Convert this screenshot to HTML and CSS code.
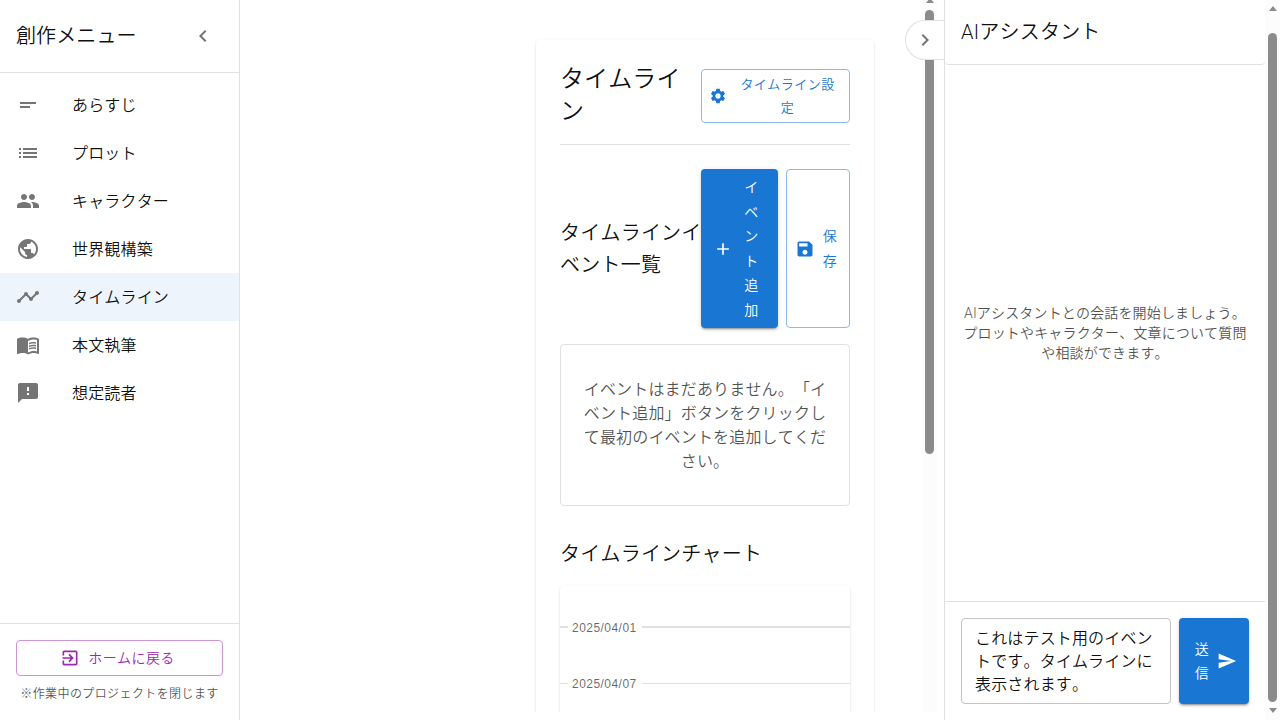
FILE: index.html
```html
<!DOCTYPE html>
<html lang="ja">
<head>
<meta charset="utf-8">
<title>タイムライン</title>
<link rel="stylesheet" href="styles.css">
</head>
<body>
<div class="app">
  <aside class="sidebar">
    <header class="sidebar-head">
      <h2 class="h6">創作メニュー</h2>
      <svg class="icon chevron" viewBox="0 0 24 24"><path d="M15.41 7.41 14 6l-6 6 6 6 1.41-1.41L10.83 12z"/></svg>
    </header>
    <nav class="nav">
      <a class="nav-item"><svg class="icon" viewBox="0 0 24 24"><path d="M4 9h16v2H4zm0 4h10v2H4z"/></svg><span>あらすじ</span></a>
      <a class="nav-item"><svg class="icon" viewBox="0 0 24 24"><path d="M3 13h2v-2H3zm0 4h2v-2H3zm0-8h2V7H3zm4 4h14v-2H7zm0 4h14v-2H7zM7 7v2h14V7z"/></svg><span>プロット</span></a>
      <a class="nav-item"><svg class="icon" viewBox="0 0 24 24"><path d="M16 11c1.66 0 2.99-1.34 2.99-3S17.66 5 16 5s-3 1.34-3 3 1.34 3 3 3m-8 0c1.66 0 2.99-1.34 2.99-3S9.66 5 8 5 5 6.34 5 8s1.34 3 3 3m0 2c-2.33 0-7 1.17-7 3.5V19h14v-2.5c0-2.33-4.67-3.5-7-3.5m8 0c-.29 0-.62.02-.97.05 1.16.84 1.97 1.97 1.97 3.45V19h6v-2.5c0-2.33-4.67-3.5-7-3.5"/></svg><span>キャラクター</span></a>
      <a class="nav-item"><svg class="icon" viewBox="0 0 24 24"><path d="M12 2C6.48 2 2 6.48 2 12s4.48 10 10 10 10-4.48 10-10S17.52 2 12 2m-1 17.93c-3.95-.49-7-3.85-7-7.93 0-.62.08-1.21.21-1.79L9 15v1c0 1.1.9 2 2 2zm6.9-2.54c-.26-.81-1-1.39-1.9-1.39h-1v-3c0-.55-.45-1-1-1H8v-2h2c.55 0 1-.45 1-1V7h2c1.1 0 2-.9 2-2v-.41c2.93 1.19 5 4.06 5 7.41 0 2.08-.8 3.97-2.1 5.39"/></svg><span>世界観構築</span></a>
      <a class="nav-item selected"><svg class="icon" viewBox="0 0 24 24"><path d="M23 8c0 1.100-.9 2-2 2-.18 0-.35-.02-.51-.07l-3.560 3.550c.05.16.07.34.07.52 0 1.100-.9 2-2 2s-2-.9-2-2c0-.18.02-.36.07-.52l-2.550-2.550c-.16.05-.34.07-.52.07s-.36-.02-.52-.07l-4.550 4.560c.05.16.07.33.07.51 0 1.100-.9 2-2 2s-2-.9-2-2 .9-2 2-2c.18 0 .35.02.51.07l4.560-4.550C8.020 9.360 8 9.180 8 9c0-1.100.9-2 2-2s2 .9 2 2c0 .18-.02.36-.07.52l2.550 2.550c.16-.05.34-.07.52-.07s.36.02.52.07l3.550-3.560C19.020 8.350 19 8.180 19 8c0-1.100.9-2 2-2s2 .9 2 2"/></svg><span>タイムライン</span></a>
      <a class="nav-item"><svg class="icon" viewBox="0 0 24 24"><path d="M21 5c-1.110-.35-2.330-.5-3.500-.5-1.950 0-4.050.4-5.500 1.500-1.450-1.100-3.550-1.500-5.500-1.500S2.450 4.900 1 6v14.650c0 .25.25.5.5.5.1 0 .15-.05.25-.05C3.100 20.450 5.050 20 6.500 20c1.950 0 4.050.4 5.500 1.500 1.350-.85 3.800-1.500 5.500-1.500 1.650 0 3.350.3 4.750 1.050.1.05.15.05.25.05.25 0 .5-.25.5-.5V6c-.6-.45-1.250-.75-2-1m0 13.500c-1.100-.35-2.300-.5-3.500-.5-1.700 0-4.150.65-5.500 1.500V8c1.350-.85 3.800-1.500 5.500-1.500 1.200 0 2.400.15 3.500.5z"/><path d="M17.500 10.500c.88 0 1.730.09 2.500.26V9.240c-.79-.15-1.640-.24-2.500-.24-1.700 0-3.240.29-4.500.83v1.660c1.130-.64 2.700-.99 4.500-.99M13 12.490v1.660c1.130-.64 2.700-.99 4.500-.99.88 0 1.730.09 2.500.26V11.900c-.79-.15-1.640-.24-2.500-.24-1.700 0-3.240.3-4.500.83m4.500 1.840c-1.700 0-3.240.29-4.500.83v1.660c1.130-.64 2.700-.99 4.500-.99.88 0 1.730.09 2.500.26v-1.520c-.79-.16-1.640-.24-2.500-.24"/></svg><span>本文執筆</span></a>
      <a class="nav-item"><svg class="icon" viewBox="0 0 24 24"><path d="M20 2H4c-1.100 0-1.990.9-1.990 2L2 22l4-4h14c1.100 0 2-.9 2-2V4c0-1.100-.9-2-2-2m-7 12h-2v-2h2zm0-4h-2V6h2z"/></svg><span>想定読者</span></a>
    </nav>
    <footer class="sidebar-foot">
      <button class="btn outlined secondary"><svg class="icon i20" viewBox="0 0 24 24"><path d="M10.090 15.590 11.500 17l5-5-5-5-1.410 1.410L12.670 11H3v2h9.670zM19 3H5c-1.110 0-2 .9-2 2v4h2V5h14v14H5v-4H3v4c0 1.100.89 2 2 2h14c1.100 0 2-.9 2-2V5c0-1.100-.9-2-2-2"/></svg><span>ホームに戻る</span></button>
      <p class="caption">※作業中のプロジェクトを閉じます</p>
    </footer>
  </aside>

  <main class="main">
    <section class="paper">
      <header class="page-head">
        <h1 class="h5">タイムライ<br>ン</h1>
        <button class="btn outlined small"><svg class="icon i18" viewBox="0 0 24 24"><path d="M19.140 12.940c.04-.3.06-.61.06-.94 0-.32-.02-.64-.07-.94l2.030-1.580c.18-.14.23-.41.12-.61l-1.920-3.320c-.12-.22-.37-.29-.59-.22l-2.390.96c-.5-.38-1.030-.7-1.620-.94l-.36-2.540c-.04-.24-.24-.41-.48-.41h-3.840c-.24 0-.43.17-.47.41l-.36 2.540c-.59.24-1.130.57-1.620.94l-2.390-.96c-.22-.08-.47 0-.59.22L2.740 8.870c-.12.21-.08.47.12.61l2.030 1.580c-.05.3-.09.63-.09.94s.02.64.07.94l-2.030 1.580c-.18.14-.23.41-.12.61l1.920 3.320c.12.22.37.29.59.22l2.390-.96c.5.38 1.030.7 1.620.94l.36 2.540c.05.24.24.41.48.41h3.840c.24 0 .44-.17.47-.41l.36-2.540c.59-.24 1.130-.56 1.620-.94l2.390.96c.22.08.47 0 .59-.22l1.920-3.320c.12-.22.07-.47-.12-.61zM12 15.600c-1.980 0-3.600-1.620-3.600-3.600s1.620-3.600 3.600-3.600 3.600 1.620 3.600 3.600-1.620 3.600-3.600 3.600"/></svg><span>タイムライン設<br>定</span></button>
      </header>
      <div class="list-head">
        <h2 class="h6">タイムラインイ<br>ベント一覧</h2>
        <div class="actions">
          <button class="btn contained add"><svg class="icon i20" viewBox="0 0 24 24"><path d="M19 13h-6v6h-2v-6H5v-2h6V5h2v6h6z"/></svg><span>イ<br>ベ<br>ン<br>ト<br>追<br>加</span></button>
          <button class="btn outlined save"><svg class="icon i20" viewBox="0 0 24 24"><path d="M17 3H5c-1.110 0-2 .9-2 2v14c0 1.100.89 2 2 2h14c1.100 0 2-.9 2-2V7zm-5 16c-1.660 0-3-1.340-3-3s1.340-3 3-3 3 1.340 3 3-1.340 3-3 3m3-10H5V5h10z"/></svg><span>保<br>存</span></button>
        </div>
      </div>
      <p class="empty">イベントはまだありません。「イ<br>ベント追加」ボタンをクリックし<br>て最初のイベントを追加してくだ<br>さい。</p>
      <h2 class="h6 chart-title">タイムラインチャート</h2>
      <div class="chart">
        <div class="tick first"><time>2025/04/01</time></div>
        <div class="tick"><time>2025/04/07</time></div>
      </div>
    </section>
    <div class="scroll main-scroll"><i class="arrow up"></i><i class="thumb"></i></div>
    <button class="toggle"><svg class="icon chevron" viewBox="0 0 24 24"><path d="M10 6 8.590 7.410 13.170 12l-4.580 4.590L10 18l6-6z"/></svg></button>
  </main>

  <aside class="chat">
    <header class="chat-head"><h2 class="h6">AIアシスタント</h2></header>
    <div class="messages"><p>AIアシスタントとの会話を開始しましょう。<br>プロットやキャラクター、文章について質問<br>や相談ができます。</p></div>
    <footer class="composer">
      <div class="field">これはテスト用のイベン<br>トです。タイムラインに<br>表示されます。</div>
      <button class="btn contained send"><span>送<br>信</span><svg class="icon i20" viewBox="0 0 24 24"><path d="M2.010 21 23 12 2.010 3 2 10l15 2-15 2z"/></svg></button>
    </footer>
  </aside>
  <div class="scroll page-scroll"><i class="arrow up"></i><i class="thumb"></i><i class="arrow down"></i></div>
</div>
</body>
</html>
```
FILE: styles.css
```css
* { box-sizing: border-box; }
body { margin: 0; overflow: hidden; background: #fff; color: rgba(0,0,0,.95); font: 350 16px/24px Roboto, "Noto Sans CJK JP", sans-serif; letter-spacing: .16px; text-spacing-trim: space-all; font-kerning: none; }
h1, h2, p { margin: 0; font-weight: inherit; white-space: nowrap; }
.h6 { font-size: 20px; line-height: 32px; letter-spacing: .22px; }
.h5 { font-size: 24px; line-height: 32px; letter-spacing: .1px; }
.icon { width: 24px; height: 24px; fill: currentColor; flex: none; display: block; }
.i18 { width: 18px; height: 18px; }
.i20 { width: 20px; height: 20px; }
.app { display: flex; height: 720px; width: 1280px; overflow: hidden; }

.sidebar { width: 240px; border-right: 1px solid #e0e0e0; display: flex; flex-direction: column; flex: none; }
.sidebar-head { height: 73px; padding: 0 24px 1px 16px; border-bottom: 1px solid #e0e0e0; display: flex; align-items: center; justify-content: space-between; }
.sidebar-head .h6 { letter-spacing: .1px; }
.chevron { color: #757575; width: 24px; }
.nav { padding-top: 8px; flex: 1; }
.nav-item { height: 48px; padding: 0 16px; display: flex; align-items: center; gap: 32px; }
.nav-item .icon { color: #757575; }
.nav-item span { padding-top: 1px; }
.selected { background: #edf4fc; }
.sidebar-foot { height: 97px; border-top: 1px solid #e0e0e0; padding: 16px; display: flex; flex-direction: column; gap: 8px; text-align: center; }
.caption { font-size: 12px; line-height: 20px; letter-spacing: .4px; color: rgba(0,0,0,.7); }

.btn { font: inherit; font-size: 14px; line-height: 24.5px; letter-spacing: .4px; display: flex; align-items: center; justify-content: center; gap: 8px; border: 1px solid transparent; border-radius: 4px; padding: 5px 15px; background: none; white-space: nowrap; flex: none; }
.btn .icon:first-child { margin-left: -4px; }
.btn .icon:last-child { margin-right: -4px; }
.outlined { color: #1976d2; border-color: #8cbae8; }
.secondary { color: #9c27b0; border-color: #ce93d8; height: 36px; }
.small { width: 149px; height: 54px; padding: 4px 9px 2px 11px; font-size: 13px; line-height: 22.75px; letter-spacing: .46px; }
.small .icon { margin-bottom: 2px; }
.small span { flex: 1; }
.contained { color: #fff; background: #1976d2; box-shadow: 0 3px 1px -2px rgba(0,0,0,.2), 0 2px 2px rgba(0,0,0,.14), 0 1px 5px rgba(0,0,0,.12); }

.main { flex: 1; position: relative; display: flex; padding: 40px 0 0 296px; height: 712px; overflow: hidden; min-width: 0; }
.paper { width: 338px; height: 760px; flex: none; padding: 24px; border-radius: 4px; box-shadow: 0 2px 1px -1px rgba(0,0,0,.12), 0 1px 1px rgba(0,0,0,.08), 0 1px 3px rgba(0,0,0,.12); }
.page-head { height: 81px; padding-bottom: 16px; border-bottom: 1px solid #e0e0e0; display: flex; align-items: center; justify-content: space-between; }
.page-head h1 { padding-bottom: 3px; }
.list-head { display: flex; align-items: center; justify-content: space-between; margin: 24px 0 16px; height: 159px; }
.actions { display: flex; gap: 8px; margin-left: -10px; align-self: stretch; }
.add { width: 77px; }
.add span { flex: 1; }
.save { width: 64px; padding: 5px 12px; }
.empty { border: 1px solid #e0e0e0; border-radius: 4px; height: 162px; padding: 33px 0 31px; text-align: center; color: rgba(0,0,0,.7); }
.chart-title { margin: 32px 0 16px; }
.chart { height: 300px; padding-top: 30px; border-radius: 4px; box-shadow: 0 2px 1px -1px rgba(0,0,0,.2), 0 1px 1px rgba(0,0,0,.14), 0 1px 3px rgba(0,0,0,.12); }
.tick { display: flex; align-items: center; height: 24px; margin-bottom: 32px; color: rgba(0,0,0,.6); font: 400 12px/24px "Liberation Sans", sans-serif; letter-spacing: .46px; }
.tick::before { content: ""; width: 8px; border-top: 1px solid #e0e0e0; margin-bottom: 1px; }
.tick::after { content: ""; flex: 1; border-top: 1px solid #e0e0e0; margin-bottom: 1px; }
.tick.first::before, .tick.first::after { border-top-width: 2px; margin-bottom: 2px; }
.tick time { padding: 0 4px; width: 74px; }

.scroll { width: 15px; background: #fcfcfc; display: flex; flex-direction: column; align-items: center; }
.thumb { width: 9px; border-radius: 5px; background: #8b8b8b; }
.arrow { border: 4.5px solid transparent; border-top-width: 0; border-bottom: 5px solid #8b8b8b; }
.arrow.down { border-top: 5px solid #8b8b8b; border-bottom-width: 0; }
.main-scroll { position: absolute; top: 0; right: 7px; height: 712px; }
.main-scroll .arrow { margin-top: -2px; }
.main-scroll .thumb { height: 444px; margin-top: 7px; }
.page-scroll { flex: none; height: 720px; padding-top: 6px; }
.page-scroll .thumb { height: 669px; margin: 22px 0 6px; }
.toggle { position: absolute; top: 20px; right: 0; width: 39px; height: 40px; padding: 0 0 0 7px; background: #fff; border: 1px solid #e0e0e0; border-right: 0; border-radius: 20px 0 0 20px; }

.chat { width: 321px; flex: none; border-left: 1px solid #e0e0e0; display: flex; flex-direction: column; }
.chat-head { height: 65px; padding: 16px; border-bottom: 1px solid #e0e0e0; border-radius: 4px; }
.messages { flex: 1; display: flex; align-items: center; justify-content: center; text-align: center; font-size: 14px; line-height: 20px; color: rgba(0,0,0,.7); }
.composer { height: 119px; border-top: 1px solid #e0e0e0; padding: 16px; display: flex; gap: 8px; }
.field { width: 210px; height: 86px; border: 1px solid #c4c4c4; border-radius: 4px; padding: 8px 13px; line-height: 23px; white-space: nowrap; }
.send { width: 70px; height: 86px; }
```
